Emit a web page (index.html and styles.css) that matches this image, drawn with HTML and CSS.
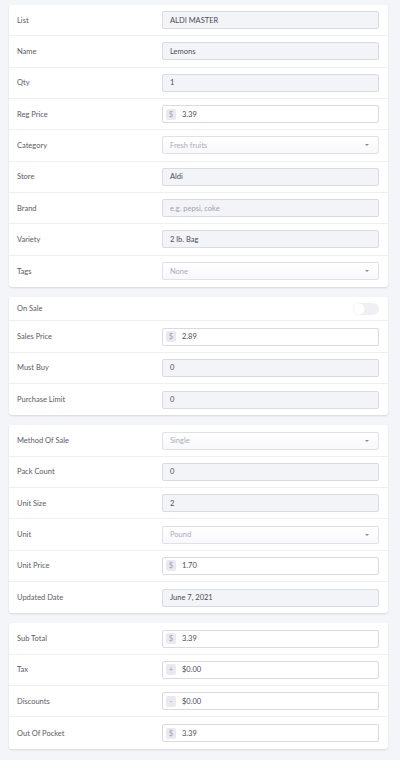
FILE: index.html
```html
<!DOCTYPE html>
<html lang="en">
<head>
    <meta charset="UTF-8">
    <meta name="viewport" content="width=device-width, initial-scale=1.0">
    <title>Edit Item</title>
    <link rel="stylesheet" href="styles.css">
</head>
<body>
    <div class="card">
        <div class="row"><label>List</label><div class="field readonly">ALDI MASTER</div></div>
        <div class="row"><label>Name</label><div class="field readonly">Lemons</div></div>
        <div class="row"><label>Qty</label><div class="field readonly">1</div></div>
        <div class="row"><label>Reg Price</label><div class="field money"><span class="badge">$</span>3.39</div></div>
        <div class="row"><label>Category</label><div class="field select">Fresh fruits<span class="caret"></span></div></div>
        <div class="row"><label>Store</label><div class="field readonly">Aldi</div></div>
        <div class="row"><label>Brand</label><div class="field readonly placeholder">e.g. pepsi, coke</div></div>
        <div class="row"><label>Variety</label><div class="field readonly">2 lb. Bag</div></div>
        <div class="row"><label>Tags</label><div class="field select">None<span class="caret"></span></div></div>
    </div>

    <div class="card">
        <div class="row short"><label>On Sale</label><div class="toggle"><span class="knob"></span></div></div>
        <div class="row"><label>Sales Price</label><div class="field money"><span class="badge">$</span>2.89</div></div>
        <div class="row"><label>Must Buy</label><div class="field readonly">0</div></div>
        <div class="row"><label>Purchase Limit</label><div class="field readonly">0</div></div>
    </div>

    <div class="card">
        <div class="row"><label>Method Of Sale</label><div class="field select">Single<span class="caret"></span></div></div>
        <div class="row"><label>Pack Count</label><div class="field readonly">0</div></div>
        <div class="row"><label>Unit Size</label><div class="field readonly">2</div></div>
        <div class="row"><label>Unit</label><div class="field select">Pound<span class="caret"></span></div></div>
        <div class="row"><label>Unit Price</label><div class="field money"><span class="badge">$</span>1.70</div></div>
        <div class="row"><label>Updated Date</label><div class="field readonly">June 7, 2021</div></div>
    </div>

    <div class="card">
        <div class="row"><label>Sub Total</label><div class="field money"><span class="badge">$</span>3.39</div></div>
        <div class="row"><label>Tax</label><div class="field money"><span class="badge">+</span>$0.00</div></div>
        <div class="row"><label>Discounts</label><div class="field money"><span class="badge">-</span>$0.00</div></div>
        <div class="row"><label>Out Of Pocket</label><div class="field money"><span class="badge">$</span>3.39</div></div>
    </div>
</body>
</html>
```

FILE: styles.css
```css
body {
    font-family: 'Lato', 'Noto Sans', sans-serif;
    background-color: #f4f5f8;
    color: #4a4a58;
    margin: 0;
    padding: 5px 12px 0 9px;
    font-size: 7.5px;
}

.card {
    background-color: #fff;
    border-radius: 3px;
    box-shadow: 0 1px 2px rgba(0, 0, 0, 0.12);
    margin-bottom: 10px;
}

.row {
    display: flex;
    align-items: center;
    height: 31.33px;
    box-sizing: border-box;
    border-bottom: 1px solid #eeeff3;
    padding: 0 9px 0 8px;
}

.row:last-child {
    border-bottom: none;
}

.row.short {
    height: 24.5px;
}

label {
    flex: 0 0 145px;
    color: #5a5a68;
}

.field {
    flex: 1;
    height: 18px;
    box-sizing: border-box;
    display: flex;
    align-items: center;
    padding: 0 7px;
    border: 1px solid #d9dae3;
    border-radius: 2px;
    color: #4b4b5a;
    background-color: #fff;
}

.field.readonly {
    background-color: #f3f4f7;
}

.field.placeholder {
    color: #a0a1b0;
}

.field.select {
    background: linear-gradient(#fff, #f8f8fb);
    color: #aaacbc;
    justify-content: space-between;
    border-color: #e0e1e8;
}

.caret {
    width: 0;
    height: 0;
    border-left: 2.5px solid transparent;
    border-right: 2.5px solid transparent;
    border-top: 2.5px solid #8a8a96;
    margin-right: 2px;
}

.field.money {
    padding-left: 3px;
}

.badge {
    width: 10px;
    height: 11px;
    background-color: #e9eaef;
    border-radius: 2px;
    color: #a0a1b0;
    display: flex;
    align-items: center;
    justify-content: center;
    margin-right: 6px;
}

.toggle {
    margin-left: auto;
    width: 26px;
    height: 12px;
    border-radius: 6px;
    background-color: #eff0f4;
    position: relative;
}

.knob {
    position: absolute;
    left: 0;
    top: 0;
    width: 12px;
    height: 12px;
    border-radius: 50%;
    background-color: #fff;
    box-shadow: 0 0 1px rgba(0, 0, 0, 0.15);
}
```
